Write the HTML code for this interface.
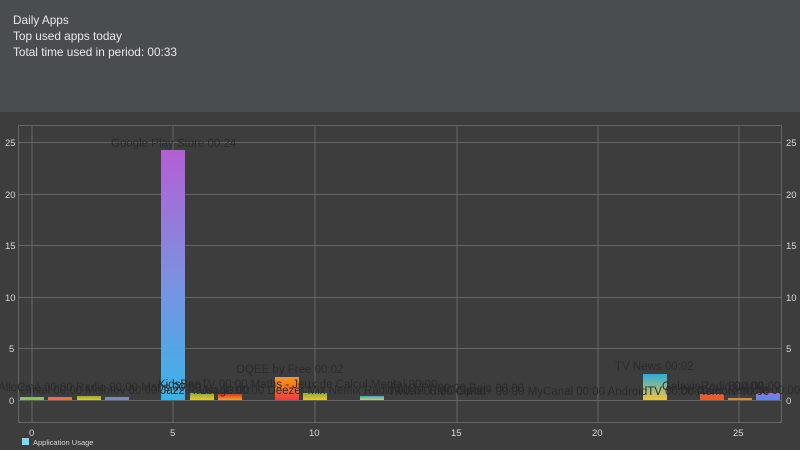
<!DOCTYPE html>
<html><head><meta charset="utf-8"><style>
html,body{margin:0;padding:0;width:800px;height:450px;overflow:hidden;background:#3d3d3d;font-family:"Liberation Sans",sans-serif}
#hdr{position:absolute;left:0;top:0;width:800px;height:112px;background:#4a4d50;color:#e8e8e8;font-size:11.8px;line-height:16px}
#hdr div{position:absolute;left:13px}
svg{position:absolute;left:0;top:0}
</style></head><body>
<div id="hdr"><div style="top:12px">Daily Apps</div><div style="top:28px">Top used apps today</div><div style="top:44px">Total time used in period: 00:33</div></div>
<svg width="800" height="450" style="top:0">
<defs>
<linearGradient id="g5" x1="0" y1="0" x2="0" y2="1"><stop offset="0" stop-color="#b35fd3"/><stop offset="0.5" stop-color="#7e8fe0"/><stop offset="1" stop-color="#39b4ea"/></linearGradient>
<linearGradient id="gy" x1="0" y1="0" x2="0" y2="1"><stop offset="0" stop-color="#86b326"/><stop offset="1" stop-color="#f2c230"/></linearGradient>
<linearGradient id="gr" x1="0" y1="0" x2="0" y2="1"><stop offset="0" stop-color="#d83a1c"/><stop offset="1" stop-color="#f2a030"/></linearGradient>
<linearGradient id="go" x1="0" y1="0" x2="0" y2="1"><stop offset="0" stop-color="#f79a1c"/><stop offset="1" stop-color="#f03c3c"/></linearGradient>
<linearGradient id="gc" x1="0" y1="0" x2="0" y2="1"><stop offset="0" stop-color="#2aaed8"/><stop offset="1" stop-color="#f2c23a"/></linearGradient>
<linearGradient id="gb" x1="0" y1="0" x2="0" y2="1"><stop offset="0" stop-color="#9a6fe0"/><stop offset="1" stop-color="#4a8ef0"/></linearGradient>
</defs>
<g stroke="#666" stroke-width="1" fill="none">
<rect x="18.5" y="125.5" width="763" height="297"/>
<line x1="32" y1="125" x2="32" y2="423"/><line x1="173" y1="125" x2="173" y2="423"/><line x1="315" y1="125" x2="315" y2="423"/><line x1="457" y1="125" x2="457" y2="423"/><line x1="598" y1="125" x2="598" y2="423"/><line x1="739" y1="125" x2="739" y2="423"/>
<line x1="18" y1="142.5" x2="782" y2="142.5"/><line x1="18" y1="194.5" x2="782" y2="194.5"/><line x1="18" y1="245.5" x2="782" y2="245.5"/><line x1="18" y1="297.5" x2="782" y2="297.5"/><line x1="18" y1="348.5" x2="782" y2="348.5"/><line x1="18" y1="400.5" x2="782" y2="400.5"/>
</g>
<g>
<rect x="20" y="397" width="24" height="3" fill="#8bc34a"/>
<rect x="48" y="397" width="24" height="3" fill="#ff6a3a"/>
<rect x="77" y="396" width="24" height="4" fill="url(#gy)"/>
<rect x="105" y="397" width="24" height="3" fill="#7986cb"/>
<rect x="161" y="150" width="24" height="250" fill="url(#g5)"/>
<rect x="190" y="393" width="24" height="7" fill="url(#gy)"/>
<rect x="218" y="394" width="24" height="6" fill="url(#gr)"/>
<rect x="275" y="377" width="24" height="23" fill="url(#go)"/>
<rect x="303" y="393" width="24" height="7" fill="url(#gy)"/>
<rect x="360" y="396" width="24" height="4" fill="url(#gc)"/>
<rect x="643" y="374" width="24" height="26" fill="url(#gc)"/>
<rect x="700" y="394" width="24" height="6" fill="#f05a2a"/>
<rect x="728" y="398" width="24" height="2" fill="#d09030"/>
<rect x="756" y="393" width="24" height="7" fill="url(#gb)"/>
</g>
<g fill="#2a2a2c" font-size="11.5" font-family="Liberation Sans,sans-serif">
<text x="111" y="147">Google Play Store 00:24</text>
<text x="236" y="373">OQEE by Free 00:02</text>
<text x="615" y="370">TV News 00:02</text>
<text x="-2" y="391">AlloCiné 00:00 Radio 00:00 Maps 00:00</text>
<text x="20" y="394">Gmail 00:00 Molotov 00:00 Jazz Radio 00:00</text>
<text x="158" y="388">KidsBeeTV 00:00 Maths - Jeux de Calcul Mental 00:00</text>
<text x="199" y="394">Usage 00:00 Deezer Mix Netflix Radio 00:00 RMC Sport</text>
<text x="390" y="392">RMC TV 00:00 Bein 00:00</text>
<text x="388" y="395">Twitch 00:00 Canal+ 00:00 MyCanal 00:00 AndroidTV 00:00 Remote 00:00</text>
<text x="662" y="390">GalaxieRadio 00:00</text>
<text x="728" y="390">Bird 00:00</text>
<text x="680" y="394">Discover Remote 00:00</text>
</g>
<g fill="#d8d8d8" font-size="9.5" font-family="Liberation Sans,sans-serif">
<text x="5" y="146">25</text><text x="5" y="198">20</text><text x="5" y="249">15</text><text x="5" y="301">10</text><text x="9" y="352">5</text><text x="9" y="404">0</text>
<text x="786" y="146">25</text><text x="786" y="198">20</text><text x="786" y="249">15</text><text x="786" y="301">10</text><text x="786" y="352">5</text><text x="786" y="404">0</text>
<text x="29" y="436">0</text><text x="170" y="436">5</text><text x="309" y="436">10</text><text x="451" y="436">15</text><text x="592" y="436">20</text><text x="733" y="436">25</text>
</g>
<rect x="22" y="438" width="7" height="7" fill="#80d8f8"/>
<text x="33" y="445" fill="#d8d8d8" font-size="7.5" font-family="Liberation Sans,sans-serif">Application Usage</text>
</svg>
</body></html>
